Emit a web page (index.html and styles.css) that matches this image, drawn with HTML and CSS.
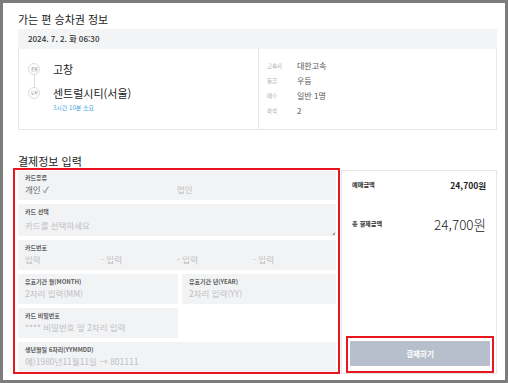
FILE: index.html
```html
<!DOCTYPE html>
<html lang="ko">
<head>
<meta charset="utf-8">
<title>승차권 결제</title>
<link rel="stylesheet" href="styles.css">
</head>
<body>
<div class="frame">
  <h2 class="title">가는 편 승차권 정보</h2>
  <div class="ticket">
    <div class="ticket-head">2024. 7. 2. 화 06:30</div>
    <div class="ticket-body">
      <div class="route">
        <span class="stop-dot"><span class="dot-text">출발</span></span>
        <span class="stop-name">고창</span>
        <span class="stop-line"></span>
        <span></span>
        <span class="stop-dot"><span class="dot-text">도착</span></span>
        <span class="stop-name">센트럴시티(서울)</span>
        <span></span>
        <span class="duration">3시간 10분 소요</span>
      </div>
      <div class="info">
        <span class="info-label">고속사</span><span class="info-value">대한고속</span>
        <span class="info-label">등급</span><span class="info-value">우등</span>
        <span class="info-label">매수</span><span class="info-value">일반 1명</span>
        <span class="info-label">좌석</span><span class="info-value">2</span>
      </div>
    </div>
  </div>

  <h2 class="title title-pay">결제정보 입력</h2>
  <div class="pay">
    <div class="form">
      <div class="field field-type">
        <div class="f-label">카드종류</div>
        <div class="f-value halves">
          <span class="chosen">개인 ✓</span>
          <span>법인</span>
        </div>
      </div>
      <div class="field field-select">
        <div class="f-label">카드 선택</div>
        <div class="f-value">카드를 선택하세요</div>
        <span class="grip"></span>
      </div>
      <div class="field">
        <div class="f-label">카드번호</div>
        <div class="f-value quarters">
          <span>입력</span>
          <span>- 입력</span>
          <span>- 입력</span>
          <span>- 입력</span>
        </div>
      </div>
      <div class="field-row">
        <div class="field">
          <div class="f-label">유효기간 월(MONTH)</div>
          <div class="f-value">2자리 입력(MM)</div>
        </div>
        <div class="field">
          <div class="f-label">유효기간 년(YEAR)</div>
          <div class="f-value">2자리 입력(YY)</div>
        </div>
      </div>
      <div class="field-row">
        <div class="field">
          <div class="f-label">카드 비밀번호</div>
          <div class="f-value">**** 비밀번호 앞 2자리 입력</div>
        </div>
        <div></div>
      </div>
      <div class="field">
        <div class="f-label">생년월일 6자리(YYMMDD)</div>
        <div class="f-value">예)1980년11월11일 → 801111</div>
      </div>
    </div>

    <div class="summary">
      <div class="sum-row">
        <span class="sum-label">예매금액</span>
        <span class="sum-amount">24,700원</span>
      </div>
      <div class="sum-row sum-total">
        <span class="sum-label">총 결제금액</span>
        <span class="sum-big">24,700원</span>
      </div>
      <button class="pay-btn" type="button">결제하기</button>
    </div>
  </div>
</div>
</body>
</html>
```

FILE: styles.css
```css
html, body {
  margin: 0;
  padding: 0;
  background: #ffffff;
}

body {
  font-family: "Noto Sans CJK KR", "Noto Sans", sans-serif;
  color: #222;
}

.frame {
  width: 508px;
  height: 383px;
  box-sizing: border-box;
  border: 3px solid #7c7c7c;
  padding: 9px 8px 0 15px;
  background: #fff;
}

.title {
  margin: 0 0 3px;
  font-size: 11px;
  line-height: 14px;
  font-weight: 400;
  color: #222;
}

.title-pay {
  margin: 24px 0 2px;
}

.ticket-head {
  height: 20px;
  line-height: 20px;
  padding-left: 10px;
  background: #f3f4f6;
  font-size: 8px;
  font-weight: 500;
  color: #333;
}

.ticket-body {
  display: flex;
  height: 81px;
  box-sizing: border-box;
  border: 1px solid #e4e6ea;
  border-top: none;
}

.route {
  width: 239px;
  box-sizing: border-box;
  padding: 14px 0 0 9px;
  display: grid;
  grid-template-columns: 12px 1fr;
  grid-template-rows: 12px 12px 12px auto;
  column-gap: 13px;
  align-content: start;
}

.stop-dot {
  width: 12px;
  height: 12px;
  box-sizing: border-box;
  border: 1px solid #dcdcdc;
  border-radius: 50%;
  background: #fff;
  display: flex;
  align-items: center;
  justify-content: center;
  overflow: visible;
}

.dot-text {
  display: block;
  flex: none;
  font-size: 8px;
  line-height: 10px;
  color: #8c8c8c;
  white-space: nowrap;
  transform: scale(0.5);
}

.stop-name {
  font-size: 11px;
  line-height: 12px;
  color: #222;
  align-self: center;
}

.stop-line {
  width: 1px;
  height: 12px;
  background: #dcdcdc;
  justify-self: center;
}

.duration {
  margin-top: 5px;
  font-size: 6px;
  line-height: 8px;
  color: #4aa6dc;
}

.info {
  flex: 1;
  border-left: 1px solid #e4e6ea;
  padding: 9px 0 0 8px;
  display: grid;
  grid-template-columns: 30px 1fr;
  grid-auto-rows: 15px;
  align-content: start;
  align-items: center;
}

.info-label {
  font-size: 5.5px;
  color: #aaa;
}

.info-value {
  font-size: 8px;
  color: #555;
}

.pay {
  display: flex;
  gap: 5px;
  height: 204px;
}

.form {
  position: relative;
  width: 318px;
  height: 202px;
  box-sizing: border-box;
  padding-top: 1px;
  display: flex;
  flex-direction: column;
  gap: 4px;
}

.form::after {
  content: "";
  position: absolute;
  left: -5px;
  right: -4px;
  top: -2px;
  bottom: -2px;
  border: 2px solid #e8161f;
  pointer-events: none;
}

.field {
  position: relative;
  height: 30px;
  box-sizing: border-box;
  padding: 4px 7px 0;
  background: #f2f3f5;
}

.field-type {
  height: 29px;
  padding-top: 3px;
}

.field-select {
  height: 32px;
}

.field-select .f-value {
  margin-top: 3px;
}

.field-row {
  display: grid;
  grid-template-columns: 160px 1fr;
  gap: 4px;
}

.f-label {
  font-size: 6px;
  line-height: 8px;
  font-weight: 600;
  color: #5e5e5e;
}

.f-value {
  margin-top: 1px;
  font-size: 8.5px;
  line-height: 12px;
  color: #c0c0c0;
}

.halves {
  display: grid;
  grid-template-columns: 1fr 1fr;
}

.chosen {
  color: #666;
}

.quarters {
  display: grid;
  grid-template-columns: repeat(4, 1fr);
}

.grip {
  position: absolute;
  right: 1px;
  bottom: 1px;
  width: 0;
  height: 0;
  border-left: 3px solid transparent;
  border-bottom: 3px solid #9a9a9a;
}

.summary {
  width: 156px;
  box-sizing: border-box;
  border: 1px solid #e4e6ea;
  display: flex;
  flex-direction: column;
}

.sum-row {
  display: flex;
  justify-content: space-between;
  align-items: center;
  padding: 0 10px;
  margin-top: 8px;
  line-height: 12px;
}

.sum-total {
  margin-top: 24px;
  line-height: 18px;
}

.sum-label {
  font-size: 6.2px;
  font-weight: 700;
  color: #333;
}

.sum-amount {
  font-size: 8.5px;
  font-weight: 700;
  color: #222;
}

.sum-big {
  font-size: 13.5px;
  font-weight: 300;
  color: #222;
}

.pay-btn {
  position: relative;
  margin: auto 6px 7px 8px;
  height: 25px;
  border: none;
  background: #b8bfcc;
  color: #fff;
  font-family: "Noto Sans CJK KR", sans-serif;
  font-size: 7.5px;
  font-weight: 700;
  padding: 0;
}

.pay-btn::after {
  content: "";
  position: absolute;
  left: -4px;
  right: -4px;
  top: -5px;
  bottom: -7px;
  border: 2px solid #e8161f;
  pointer-events: none;
}
```
